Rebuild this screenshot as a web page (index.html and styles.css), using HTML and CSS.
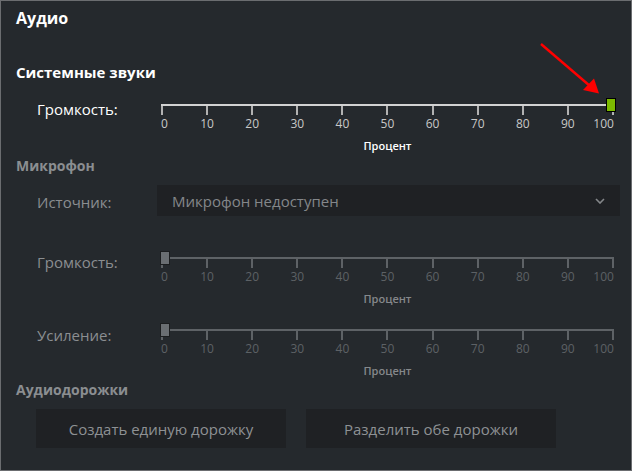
FILE: index.html
```html
<!DOCTYPE html>
<html lang="ru">
<head>
<meta charset="utf-8">
<title>Аудио</title>
<link rel="stylesheet" href="styles.css">
</head>
<body>
<div class="window">
  <h1 class="title">Аудио</h1>

  <h2 class="section active">Системные звуки</h2>
  <div class="row slider-row">
    <div class="label active">Громкость:</div>
    <div class="slider active">
      <div class="track"></div>
      <div class="thumb thumb-on" style="left: 446px"></div>
      <div class="ticks"><i></i><i></i><i></i><i></i><i></i><i></i><i></i><i></i><i></i><i></i><i></i></div>
      <div class="nums"><span>0</span><span>10</span><span>20</span><span>30</span><span>40</span><span>50</span><span>60</span><span>70</span><span>80</span><span>90</span><span>100</span></div>
      <div class="unit">Процент</div>
    </div>
  </div>

  <h2 class="section dim">Микрофон</h2>
  <div class="row select-row">
    <div class="label dim">Источник:</div>
    <div class="select">
      <span>Микрофон недоступен</span>
      <svg class="chev" width="10" height="6" viewBox="0 0 10 6"><path d="M1 1 L5 5 L9 1" fill="none" stroke="#84878a" stroke-width="1.6"/></svg>
    </div>
  </div>

  <div class="row slider-row mic-vol">
    <div class="label dim">Громкость:</div>
    <div class="slider dim">
      <div class="track"></div>
      <div class="thumb thumb-off" style="left: 0px"></div>
      <div class="ticks"><i></i><i></i><i></i><i></i><i></i><i></i><i></i><i></i><i></i><i></i><i></i></div>
      <div class="nums"><span>0</span><span>10</span><span>20</span><span>30</span><span>40</span><span>50</span><span>60</span><span>70</span><span>80</span><span>90</span><span>100</span></div>
      <div class="unit">Процент</div>
    </div>
  </div>

  <div class="row slider-row mic-gain">
    <div class="label dim">Усиление:</div>
    <div class="slider dim">
      <div class="track"></div>
      <div class="thumb thumb-off" style="left: 0px"></div>
      <div class="ticks"><i></i><i></i><i></i><i></i><i></i><i></i><i></i><i></i><i></i><i></i><i></i></div>
      <div class="nums"><span>0</span><span>10</span><span>20</span><span>30</span><span>40</span><span>50</span><span>60</span><span>70</span><span>80</span><span>90</span><span>100</span></div>
      <div class="unit">Процент</div>
    </div>
  </div>

  <h2 class="section dim tracks">Аудиодорожки</h2>
  <div class="buttons">
    <button class="btn">Создать единую дорожку</button>
    <button class="btn">Разделить обе дорожки</button>
  </div>

  <svg class="arrow" width="632" height="471" viewBox="0 0 632 471">
    <line x1="541" y1="44" x2="590" y2="86" stroke="#ff0000" stroke-width="2.4"/>
    <polygon points="599,93.5 583,90 594,78.5" fill="#ff0000"/>
  </svg>
</div>
</body>
</html>
```

FILE: styles.css
```css
* { box-sizing: border-box; }
html, body { margin: 0; padding: 0; }
body {
  width: 632px;
  height: 471px;
  background: #25292d;
  font-family: "Open Sans", "Liberation Sans", sans-serif;
  overflow: hidden;
}
.window {
  position: relative;
  width: 632px;
  height: 471px;
  border: 1px solid #6b6d70;
  background: #25292d;
  padding: 7px 0 0 15px;
}
.title {
  margin: 0;
  font-size: 16px;
  line-height: 20px;
  font-weight: 700;
  color: #ffffff;
}
.section {
  margin: 0;
  font-size: 14px;
  line-height: 20px;
  font-weight: 700;
}
.section.active { color: #ffffff; margin-top: 34px; font-size: 15px; }
.section.dim { color: #8b8e91; margin-top: 3px; }
.section.tracks { margin-top: 2px; }

.row {
  display: grid;
  grid-template-columns: 123px 1fr;
  padding-left: 21px;
}
.slider-row { margin-top: 16px; }
.label {
  font-size: 15px;
  line-height: 20px;
  margin-top: 1px;
}
.label.active { color: #ffffff; }
.label.dim { color: #8b8e91; }

.slider {
  position: relative;
  width: 455px;
  padding-top: 6px;
}
.track { height: 2px; margin: 0 1px 0 1px; }
.slider.active .track { background: #d2d2d2; }
.slider.dim .track { background: #5e6266; }
.thumb {
  position: absolute;
  top: 0;
  width: 10px;
  height: 14px;
}
.thumb-on { background: #7cba00; border: 1px solid #000000; }
.thumb-off { background: #6a6e72; border: 1px solid #1b1d1f; }

.ticks {
  display: flex;
  justify-content: space-between;
  height: 9px;
  margin: 0 1px;
}
.ticks i { display: block; width: 2px; height: 9px; }
.slider.active .ticks i { background: #b2b2b2; }
.slider.dim .ticks i { background: #5e6266; }

.nums {
  display: flex;
  justify-content: space-between;
  margin: 1px 1px 0 1px;
  font-size: 12px;
  line-height: 15px;
}
.nums span {
  width: 2px;
  display: flex;
  justify-content: center;
  white-space: nowrap;
}
.nums span:first-child { justify-content: flex-start; }
.nums span:last-child { justify-content: flex-end; }
.slider.active .nums { color: #c8c8c8; }
.slider.dim .nums { color: #5d6165; }

.unit {
  margin-top: 8px;
  text-align: center;
  font-size: 11px;
  line-height: 14px;
  font-weight: 600;
}
.slider.active .unit { color: #ffffff; }
.slider.dim .unit { color: #85888b; }

.select-row { margin-top: 9px; align-items: center; }
.select-row .label { margin-top: 2px; }
.select {
  margin-left: -3px;
  width: 463px;
  height: 31px;
  background: #1f2124;
  display: flex;
  align-items: center;
  justify-content: space-between;
  padding: 1px 15px 0 15px;
  font-size: 15px;
  color: #84878a;
}
.chev { display: block; }

.mic-vol { margin-top: 35px; }
.mic-gain { margin-top: 17px; }
.mic-gain .label { margin-top: 2px; }

.buttons {
  display: flex;
  gap: 20px;
  padding-left: 20px;
  margin-top: 9px;
}
.btn {
  width: 250px;
  height: 39px;
  border: none;
  background: #1f2124;
  color: #8e9194;
  font-family: "Open Sans", "Liberation Sans", sans-serif;
  font-size: 15px;
  padding: 0;
}

.arrow {
  position: absolute;
  left: -1px;
  top: -1px;
  pointer-events: none;
}
```
